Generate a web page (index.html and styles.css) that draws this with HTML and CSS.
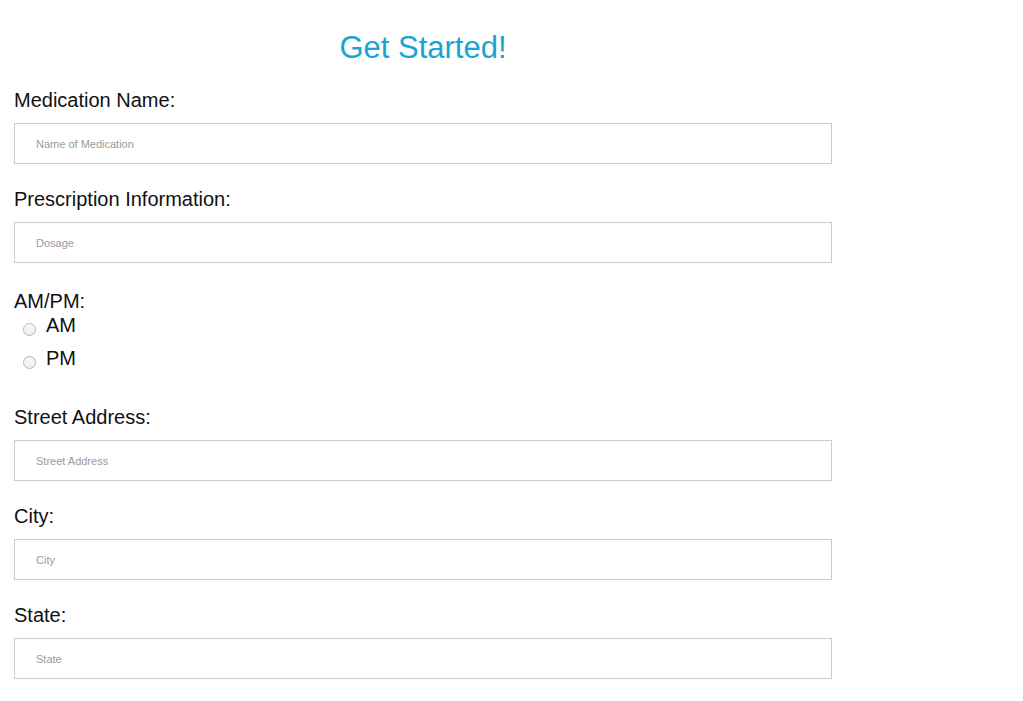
FILE: index.html
```html
<!DOCTYPE html>
<html>
<head>
<meta charset="utf-8">
<link rel="stylesheet" href="styles.css">
</head>
<body>
<form class="form">
  <h1 class="title">Get Started!</h1>
  <div class="field">
    <label class="label">Medication Name:</label>
    <input class="input" type="text" placeholder="Name of Medication">
  </div>
  <div class="field">
    <label class="label">Prescription Information:</label>
    <input class="input" type="text" placeholder="Dosage">
  </div>
  <div class="field field-radio">
    <label class="label">AM/PM:</label>
    <div class="radio-row"><span class="radio"></span><span class="radio-text">AM</span></div>
    <div class="radio-row"><span class="radio"></span><span class="radio-text">PM</span></div>
  </div>
  <div class="field">
    <label class="label">Street Address:</label>
    <input class="input" type="text" placeholder="Street Address">
  </div>
  <div class="field">
    <label class="label">City:</label>
    <input class="input" type="text" placeholder="City">
  </div>
  <div class="field">
    <label class="label">State:</label>
    <input class="input" type="text" placeholder="State">
  </div>
</form>
</body>
</html>
```

FILE: styles.css
```css
html, body {
  margin: 0;
  padding: 0;
  background: #ffffff;
}
body {
  font-family: "Liberation Sans", Arial, sans-serif;
  color: #111111;
}
.form {
  width: 818px;
  margin: 0 0 0 14px;
  padding-top: 29px;
  display: flex;
  flex-direction: column;
}
.title {
  margin: 0;
  font-size: 31px;
  line-height: 38px;
  font-weight: normal;
  color: #1ba3d1;
  text-align: center;
}
.field {
  display: flex;
  flex-direction: column;
  margin-top: 23px;
}
.field:first-of-type {
  margin-top: 21px;
}
.label {
  display: block;
  font-size: 20px;
  line-height: 24px;
  margin-bottom: 11px;
  color: #111111;
}
.input {
  box-sizing: border-box;
  height: 41px;
  width: 818px;
  margin: 0;
  border: 1px solid #cccccc;
  padding: 0 21px;
  font-family: "Liberation Sans", Arial, sans-serif;
  font-size: 11px;
  color: #333;
  outline: none;
}
.input::placeholder {
  color: #9a9a9a;
}
.field-radio {
  margin-top: 26px;
}
.field-radio .label {
  margin-bottom: 0;
}
.radio-row {
  display: flex;
  align-items: flex-start;
  height: 33px;
}
.radio {
  box-sizing: border-box;
  width: 13px;
  height: 13px;
  border: 1px solid #b4b4b4;
  border-radius: 50%;
  background: linear-gradient(#fafafa, #ededed);
  margin: 10px 10px 0 9px;
}
.radio-text {
  font-size: 20px;
  line-height: 24px;
}
.field-radio + .field {
  margin-top: 26px;
}
```
